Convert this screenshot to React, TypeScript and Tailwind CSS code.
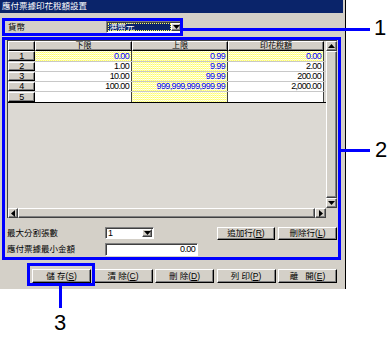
import React from "react";

// --- Win classic bevels ---
const raised =
  "border border-t-white border-l-white border-r-[#404040] border-b-[#404040] shadow-[inset_-1px_-1px_0_#808080]";
const sunken =
  "border border-t-[#808080] border-l-[#808080] border-r-white border-b-white shadow-[inset_1px_1px_0_#404040]";
const cjk = "font-['Liberation_Sans','Noto_Sans_CJK_TC',sans-serif]";
const num = "font-['Liberation_Sans',sans-serif] tracking-[-0.65px]";
// dotted yellow fill of the editable cells
const hatch =
  "bg-[repeating-linear-gradient(90deg,#ffffb8_0px,#ffffb8_1px,transparent_1px,transparent_2px),repeating-linear-gradient(0deg,#ffff66_0px,#ffff66_1px,#ffffff_1px,#ffffff_2px)]";

interface Row {
  no: number;
  lo: string;
  hi: string;
  tax: string;
  h: string;
}

const rows: Row[] = [
  { no: 1, lo: "0.00", hi: "0.99", tax: "0.00", h: "h-[11px]" },
  { no: 2, lo: "1.00", hi: "9.99", tax: "2.00", h: "h-[10px]" },
  { no: 3, lo: "10.00", hi: "99.99", tax: "200.00", h: "h-[10px]" },
  { no: 4, lo: "100.00", hi: "999,999,999,999.99", tax: "2,000.00", h: "h-[10px]" },
  { no: 5, lo: "", hi: "", tax: "", h: "h-[11px]" },
];

const Arrow: React.FC<{ dir: "up" | "down" | "left" | "right" }> = ({ dir }) => {
  const pts = {
    up: "0,4 3.5,0 7,4",
    down: "0,0 7,0 3.5,4",
    left: "4,0 4,7 0,3.5",
    right: "0,0 0,7 4,3.5",
  }[dir];
  const vert = dir === "up" || dir === "down";
  return (
    <svg width={vert ? 7 : 4} height={vert ? 4 : 7} viewBox={vert ? "0 0 7 4" : "0 0 4 7"}>
      <polygon points={pts} fill="#000" />
    </svg>
  );
};

const Btn: React.FC<{ label: string; k: string; className?: string }> = ({ label, k, className }) => (
  <div
    className={`${raised} ${className ?? ""} flex items-center justify-center bg-[#d4d0c8] text-[8.5px] leading-none text-black ${cjk} border-r-black border-b-black`}
  >
    <span className="whitespace-pre">
      {label}(<span className="underline">{k}</span>)
    </span>
  </div>
);

const Cell: React.FC<{ text: string; w: string; hl: boolean }> = ({ text, w, hl }) => (
  <div
    className={`${w} h-full shrink-0 border-r border-r-[#404040] flex items-center justify-end pr-[2px] text-[9px] leading-none ${num} ${
      hl ? `${hatch} text-[#0000ff]` : "bg-white text-black"
    }`}
  >
    {text}
  </div>
);

const App: React.FC = () => {
  return (
    <div className={`relative w-[390px] h-[339px] bg-white overflow-hidden ${cjk}`}>
      {/* window */}
      <div className="w-[346px] h-[289px] bg-[#d4d0c8] border-r border-r-black flex flex-col">
        <div className="w-[343px] h-[13px] bg-[#0a246a] flex items-center pl-[2px]">
          <span className="text-white text-[8.5px] leading-none">應付票據印花稅額設置</span>
        </div>

        {/* currency */}
        <div className="mt-[8px] h-[12px] flex items-center">
          <span className="ml-[8px] w-[98px] text-[8.5px] leading-none">貨幣</span>
          <div className={`${sunken} w-[77px] h-[12px] bg-white flex items-stretch p-[1px]`}>
            <div className="flex-1 bg-[#0a246a] outline outline-1 outline-dotted outline-[#ffff66] -outline-offset-1 flex items-center pl-[1px]">
              <span className="text-white text-[8.5px] leading-none">港幣元</span>
            </div>
            <div className={`${raised} w-[10px] bg-[#d4d0c8] flex items-center justify-center`}>
              <Arrow dir="down" />
            </div>
          </div>
        </div>

        {/* grid */}
        <div className="mt-[7px] ml-[7px] w-[330px] h-[178px] border-l border-t border-[#404040] flex">
          <div className="w-[318px] flex flex-col">
            <div className="flex-1 bg-[#dcd9d3]">
              {/* header */}
              <div className="flex h-[10px]">
                <div className={`${raised} w-[27px] h-full bg-[#d4d0c8] border-r-black border-b-black`} />
                {["下限", "上限", "印花稅額"].map((h, i) => (
                  <div
                    key={h}
                    className={`${raised} ${i === 0 ? "w-[97px]" : "w-[96px]"} h-full bg-[#d4d0c8] border-r-black border-b-black flex items-center justify-center text-[8px] leading-none`}
                  >
                    {h}
                  </div>
                ))}
              </div>
              {rows.map((r) => (
                <div
                  key={r.no}
                  className={`flex ${r.h} border-b ${r.no === 5 ? "border-b-black" : "border-b-[#c8c8c8]"}`}
                >
                  <div
                    className={`${raised} w-[27px] h-full shrink-0 bg-[#d4d0c8] border-r-black border-b-black flex items-center justify-center text-[9px] leading-none ${num}`}
                  >
                    {r.no}
                  </div>
                  <Cell text={r.lo} w="w-[97px]" hl={r.no === 1} />
                  <Cell text={r.hi} w="w-[96px]" hl={true} />
                  <Cell text={r.tax} w="w-[96px]" hl={r.no === 1} />
                </div>
              ))}
            </div>
            {/* horizontal scroll */}
            <div className="h-[10px] flex bg-[#e8e6e1]">
              <div className={`${raised} w-[10px] h-full bg-[#d4d0c8] flex items-center justify-center`}>
                <Arrow dir="left" />
              </div>
              <div className={`${raised} flex-1 h-full bg-[#d4d0c8]`} />
              <div className={`${raised} w-[11px] h-full bg-[#d4d0c8] flex items-center justify-center`}>
                <Arrow dir="right" />
              </div>
            </div>
          </div>
          {/* vertical scroll */}
          <div className="w-[11px] flex flex-col bg-[#e8e6e1]">
            <div className={`${raised} h-[10px] bg-[#d4d0c8] flex items-center justify-center`}>
              <Arrow dir="up" />
            </div>
            <div className={`${raised} flex-1 bg-[#d4d0c8]`} />
            <div className={`${raised} h-[10px] bg-[#d4d0c8] flex items-center justify-center`}>
              <Arrow dir="down" />
            </div>
            <div className="h-[10px] bg-[#d4d0c8]" />
          </div>
        </div>

        {/* options */}
        <div className="mt-[9px] h-[13px] flex items-start">
          <span className="ml-[7px] w-[98px] mt-[2px] text-[8.5px] leading-none">最大分割張數</span>
          <div className={`${sunken} w-[49px] h-[12px] bg-white flex items-stretch p-[1px]`}>
            <div className={`flex-1 flex items-center pl-[1px] text-[9px] leading-none ${num}`}>1</div>
            <div className={`${raised} w-[10px] bg-[#d4d0c8] flex items-center justify-center`}>
              <Arrow dir="down" />
            </div>
          </div>
          <Btn label="追加行" k="R" className="ml-[63px] w-[58px] h-[13px]" />
          <Btn label="刪除行" k="L" className="ml-[3px] w-[59px] h-[13px]" />
        </div>
        <div className="mt-[3px] h-[13px] flex items-center">
          <span className="ml-[7px] w-[98px] text-[8.5px] leading-none">應付票據最小金額</span>
          <div
            className={`${sunken} w-[93px] h-[13px] bg-white flex items-center justify-end pr-[2px] text-[9px] leading-none ${num}`}
          >
            0.00
          </div>
        </div>

        {/* bottom buttons */}
        <div className="mt-[13px] ml-[32px] flex gap-[2.5px]">
          <Btn label="儲 存" k="S" className="w-[59px] h-[14px]" />
          <Btn label="清 除" k="C" className="w-[59px] h-[14px]" />
          <Btn label="刪 除" k="D" className="w-[59px] h-[14px]" />
          <Btn label="列 印" k="P" className="w-[59px] h-[14px]" />
          <Btn label="離   開" k="E" className="w-[59px] h-[14px]" />
        </div>
      </div>

      {/* callouts */}
      <div className="absolute left-[2px] top-[18px] w-[181px] h-[18px] border-[3px] border-[#0000ff]" />
      <div className="absolute left-[183px] top-[28px] w-[187px] h-[3px] bg-[#0000ff]" />
      <span className="absolute left-[374px] top-[17px] text-[22px] leading-none font-['Liberation_Sans',sans-serif]">1</span>

      <div className="absolute left-[2px] top-[37px] w-[339px] h-[223px] border-[3px] border-[#0000ff]" />
      <div className="absolute left-[341px] top-[149px] w-[29px] h-[3px] bg-[#0000ff]" />
      <span className="absolute left-[375px] top-[139px] text-[22px] leading-none font-['Liberation_Sans',sans-serif]">2</span>

      <div className="absolute left-[27px] top-[263px] w-[68px] h-[23px] border-[3px] border-[#0000ff]" />
      <div className="absolute left-[59px] top-[286px] w-[3px] h-[22px] bg-[#0000ff]" />
      <span className="absolute left-[54px] top-[312px] text-[22px] leading-none font-['Liberation_Sans',sans-serif]">3</span>
    </div>
  );
};

export default App;
